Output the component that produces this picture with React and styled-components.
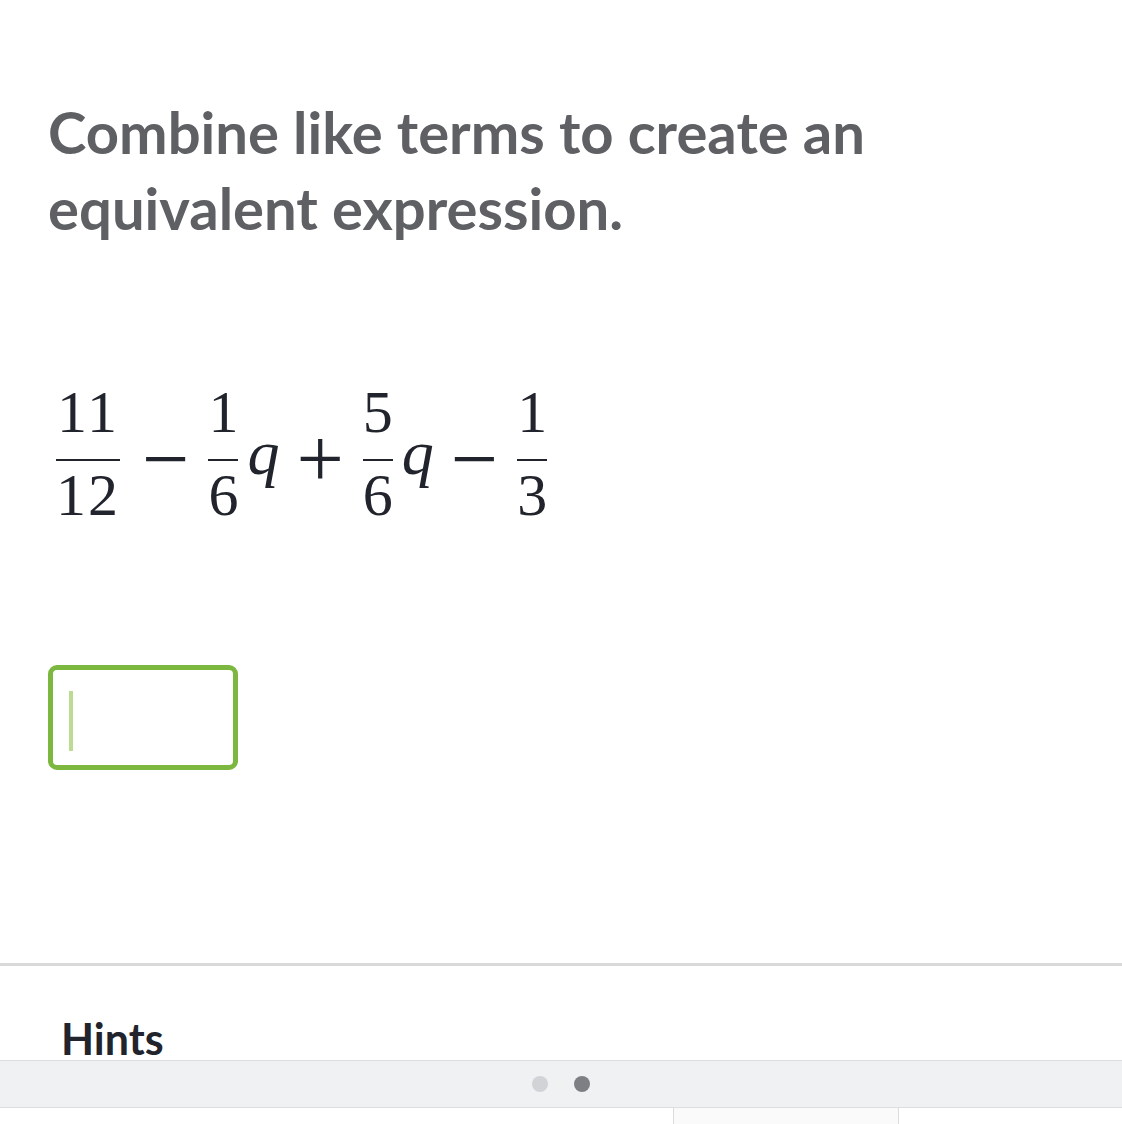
import React from "react";
import styled, { createGlobalStyle } from "styled-components";

const GlobalStyle = createGlobalStyle`
  html, body {
    margin: 0;
    padding: 0;
    background: #fff;
  }
  body {
    font-family: Lato, "Noto Sans", sans-serif;
  }
`;

const Page = styled.div`
  width: 1122px;
  height: 1124px;
  overflow: hidden;
  display: flex;
  flex-direction: column;
`;

const Content = styled.div`
  padding: 94px 0 0 48px;
  height: 963px;
  box-sizing: border-box;
`;

const Title = styled.h1`
  margin: 0;
  font-family: Lato, sans-serif;
  font-weight: 700;
  font-size: 58px;
  line-height: 76px;
  color: #5e6064;
  max-width: 900px;
`;

const MathRow = styled.div`
  display: flex;
  align-items: flex-start;
  margin-top: 136px;
  padding-left: 7px;
  font-family: "Liberation Serif", "Times New Roman", serif;
  font-size: 60px;
  color: #21242c;
`;

const Fraction = styled.div`
  display: inline-flex;
  flex-direction: column;
  align-items: center;
  padding: 0 1px;
`;

const Num = styled.span`
  line-height: 60px;
  height: 60px;
  letter-spacing: ${(p) => (p.$wide ? "2px" : "0")};
`;

const Bar = styled.span`
  align-self: stretch;
  height: 2px;
  background: #21242c;
  margin: 17px 0 4px;
`;

const Op = styled.span`
  font-size: 84px;
  line-height: 84px;
  height: 84px;
  margin: 35px 18px 0 21px;
`;

const Var = styled.span`
  font-style: italic;
  font-size: 64px;
  line-height: 60px;
  margin: 41px -4px 0 8px;
`;

const Input = styled.div`
  margin-top: 140px;
  width: 190px;
  height: 105px;
  box-sizing: border-box;
  border: 5px solid #7cb83f;
  border-radius: 9px;
  padding: 21px 0 0 16px;
`;

const Caret = styled.div`
  width: 4px;
  height: 60px;
  background: #bcdc93;
`;

const Divider = styled.div`
  height: 3px;
  background: #d9d9d9;
`;

const HintsArea = styled.div`
  height: 94px;
  box-sizing: border-box;
  padding: 51px 0 0 61px;
`;

const HintsTitle = styled.h2`
  margin: 0;
  font-family: Lato, sans-serif;
  font-weight: 700;
  font-size: 43px;
  line-height: 43px;
  color: #21242c;
`;

const Pager = styled.div`
  height: 48px;
  box-sizing: border-box;
  background: #f0f1f3;
  border-top: 1px solid #dcdee0;
  border-bottom: 1px solid #dcdee0;
  display: flex;
  align-items: center;
  justify-content: center;
  gap: 26px;
`;

const Dot = styled.span`
  width: 16px;
  height: 16px;
  border-radius: 50%;
  background: ${(p) => (p.$active ? "#7d7f84" : "#d2d3d6")};
`;

const Tray = styled.div`
  flex: 1;
  display: grid;
  grid-template-columns: 673px 225px 1fr;
`;

const Cell = styled.div`
  background: ${(p) => (p.$shade ? "#fafafa" : "#fff")};
  border-left: ${(p) => (p.$line ? "1px solid #dcdcdc" : "none")};
`;

function Frac({ n, d }) {
  const wide = n.length > 1;
  return (
    <Fraction>
      <Num $wide={wide}>{n}</Num>
      <Bar />
      <Num $wide={wide}>{d}</Num>
    </Fraction>
  );
}

export default function App() {
  return (
    <Page>
      <GlobalStyle />
      <Content>
        <Title>Combine like terms to create an equivalent expression.</Title>
        <MathRow>
          <Frac n="11" d="12" />
          <Op>−</Op>
          <Frac n="1" d="6" />
          <Var>q</Var>
          <Op>+</Op>
          <Frac n="5" d="6" />
          <Var>q</Var>
          <Op>−</Op>
          <Frac n="1" d="3" />
        </MathRow>
        <Input>
          <Caret />
        </Input>
      </Content>
      <Divider />
      <HintsArea>
        <HintsTitle>Hints</HintsTitle>
      </HintsArea>
      <Pager>
        <Dot />
        <Dot $active />
      </Pager>
      <Tray>
        <Cell />
        <Cell $shade $line />
        <Cell $line />
      </Tray>
    </Page>
  );
}
